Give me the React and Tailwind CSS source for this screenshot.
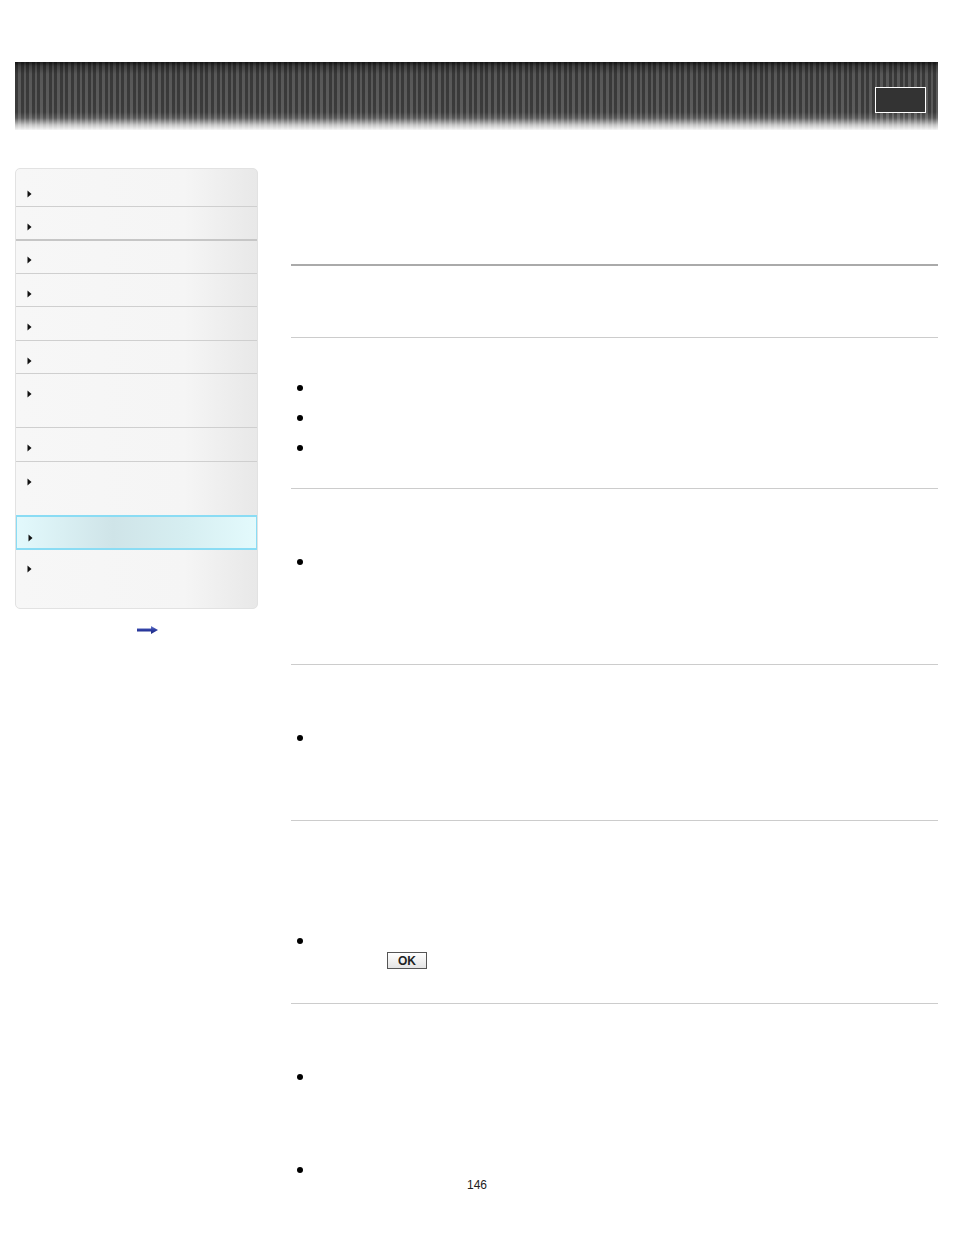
import React from "react";

function Arrow() {
  return (
    <svg width="5" height="8" viewBox="0 0 5 8" className="block">
      <path d="M0.5 0.5 L4.5 4 L0.5 7.5 Z" fill="#111" />
    </svg>
  );
}

function NavRow({ h, top = 19, border = "border-b border-[#cfcfcf]", active = false }) {
  return (
    <div
      className={
        active
          ? "relative flex border border-y-2 border-[#8adcf4] bg-[linear-gradient(to_right,#e2f9fc_0%,#cfe4e8_40%,#d6eef1_70%,#e3fafc_100%)]"
          : "flex " + border
      }
      style={{ height: h }}
    >
      <div className="pl-[11px]" style={{ paddingTop: top - 4 }}>
        <Arrow />
      </div>
    </div>
  );
}

function Dot({ className = "" }) {
  return <span className={"block w-[6px] h-[6px] rounded-full bg-black ml-[6px] " + className} />;
}

export default function App() {
  return (
    <div className="w-[954px] min-h-[1235px] bg-white flex flex-col font-['Liberation_Sans',Arial,sans-serif]">
      {/* Header */}
      <div className="mt-[62px] ml-[15px] w-[923px] h-[68px] flex justify-end items-start pr-[12px] pt-[25px] bg-[linear-gradient(to_bottom,rgba(0,0,0,0.65)_0px,rgba(0,0,0,0.3)_4px,rgba(0,0,0,0.05)_12px,rgba(0,0,0,0)_50px,rgba(255,255,255,0.15)_56px,rgba(255,255,255,0.7)_63px,rgba(255,255,255,0.95)_68px),repeating-linear-gradient(to_right,#3b3b3b_0px,#3b3b3b_3px,#5c5c5c_3px,#5c5c5c_5.6px)]">
        <div className="w-[51px] h-[26px] border border-white bg-[#333]" />
      </div>

      {/* Body */}
      <div className="flex mt-[38px]">
        {/* Sidebar */}
        <div className="ml-[15px] w-[243px] flex flex-col items-center">
          <div className="w-[243px] rounded-[5px] border border-[#e2e2e2] bg-[linear-gradient(to_right,#f7f7f7_0%,#f5f5f5_70%,#e8e8e8_100%)] overflow-hidden flex flex-col">
            <NavRow h={38} top={25} />
            <NavRow h={34} top={20} border="border-b-2 border-[#c6c6c6]" />
            <NavRow h={33} top={19} />
            <NavRow h={33} top={20} />
            <NavRow h={34} top={20} />
            <NavRow h={33} top={20} />
            <NavRow h={54} top={20} />
            <NavRow h={34} top={20} />
            <NavRow h={53} top={20} border="" />
            <NavRow h={35} top={21} active />
            <NavRow h={58} top={19} border="" />
          </div>
          <div className="mt-[17px] ml-[22px]">
            <svg width="21" height="8" viewBox="0 0 21 8" className="block">
              <defs>
                <linearGradient id="ag" x1="0" y1="0" x2="0" y2="1">
                  <stop offset="0" stopColor="#6f7fd0" />
                  <stop offset="0.5" stopColor="#2a3aa0" />
                  <stop offset="1" stopColor="#1c2a80" />
                </linearGradient>
              </defs>
              <path d="M0 2.5 H14 V0 L21 4 L14 8 V5.5 H0 Z" fill="url(#ag)" />
            </svg>
          </div>
        </div>

        {/* Main */}
        <div className="ml-[33px] w-[647px] flex flex-col">
          <div className="h-[96px]" />
          <div className="h-[2px] bg-[#aaaaaa]" />
          <div className="h-[71px]" />
          <div className="h-px bg-[#cccccc]" />
          <div className="h-[150px] pt-[47px] flex flex-col gap-[24px]">
            <Dot />
            <Dot />
            <Dot />
          </div>
          <div className="h-px bg-[#cccccc]" />
          <div className="h-[175px] pt-[70px]">
            <Dot />
          </div>
          <div className="h-px bg-[#cccccc]" />
          <div className="h-[155px] pt-[70px]">
            <Dot />
          </div>
          <div className="h-px bg-[#cccccc]" />
          <div className="h-[182px] pt-[117px]">
            <Dot />
            <div className="mt-[8px] ml-[96px] w-[40px] h-[17px] border border-[#555] bg-[linear-gradient(to_bottom,#ffffff,#e4e4e4)] flex items-center justify-center text-[12px] leading-none font-semibold text-[#222]">
              OK
            </div>
          </div>
          <div className="h-px bg-[#cccccc]" />
          <div className="pt-[70px]">
            <Dot />
            <Dot className="mt-[87px]" />
          </div>
        </div>
      </div>

      {/* Footer page number */}
      <div className="mt-[5px] h-[14px] text-center text-[12px] leading-[14px] text-[#222]">146</div>
    </div>
  );
}
